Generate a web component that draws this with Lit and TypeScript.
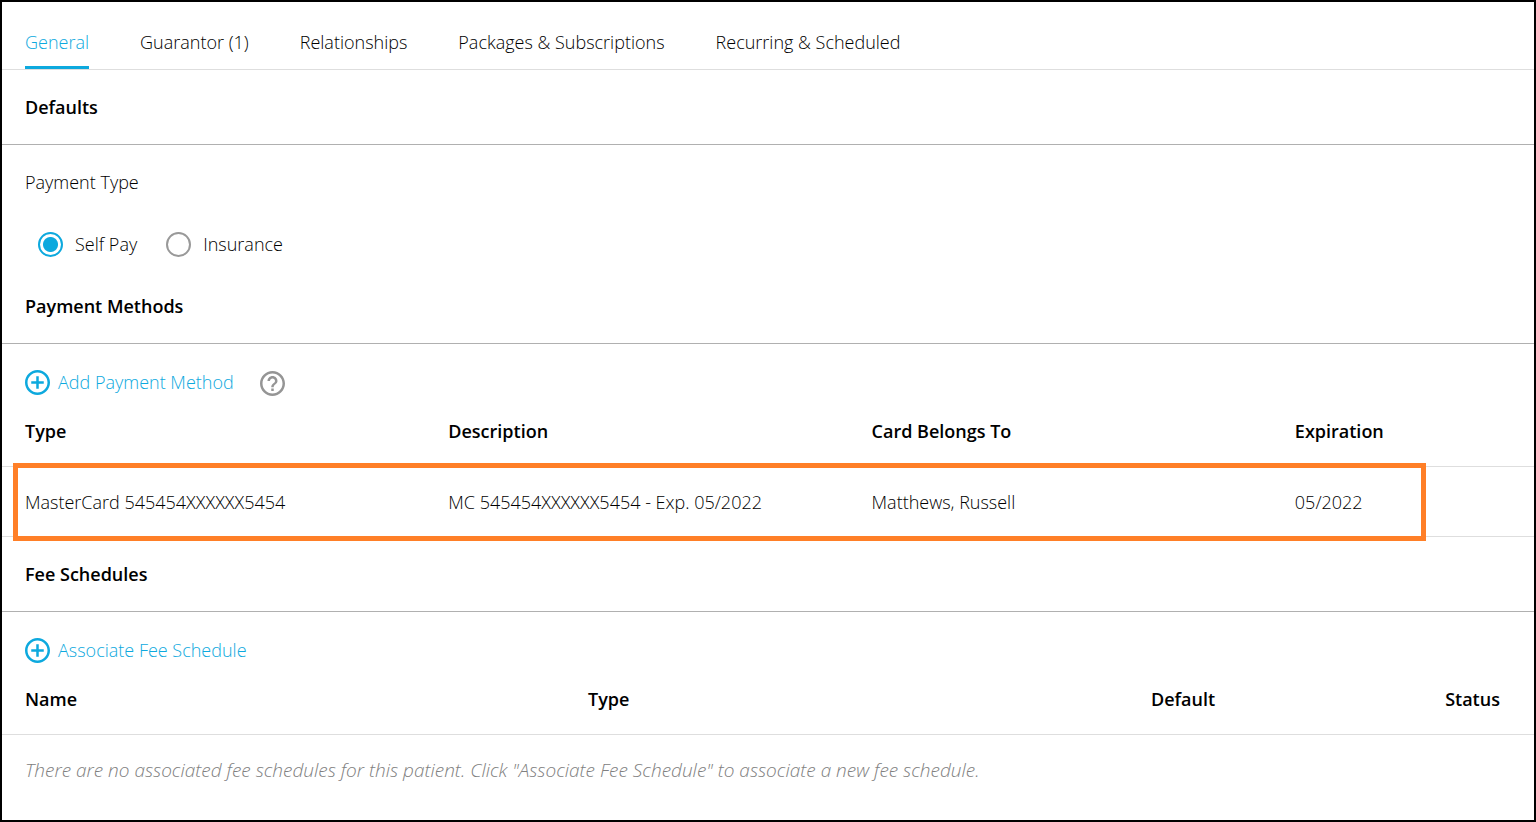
import { LitElement, html, css } from "lit";
import { customElement, state } from "lit/decorators.js";
import { classMap } from "lit/directives/class-map.js";

const TABS = [
  "General",
  "Guarantor (1)",
  "Relationships",
  "Packages & Subscriptions",
  "Recurring & Scheduled",
];

const PAYMENT_TYPES = ["Self Pay", "Insurance"];

const PAYMENT_METHODS = [
  {
    type: "MasterCard 545454XXXXXX5454",
    description: "MC 545454XXXXXX5454 - Exp. 05/2022",
    owner: "Matthews, Russell",
    expiration: "05/2022",
  },
];

const addIcon = html`<svg class="icon" viewBox="2 2 20 20" aria-hidden="true">
  <path
    d="M13 7h-2v4H7v2h4v4h2v-4h4v-2h-4V7zm-1-5C6.480 2 2 6.480 2 12s4.480 10 10 10 10-4.480 10-10S17.520 2 12 2zm0 18c-4.410 0-8-3.590-8-8s3.590-8 8-8 8 3.590 8 8-3.590 8-8 8z"
  />
</svg>`;

const helpIcon = html`<svg class="icon" viewBox="2 2 20 20" aria-hidden="true">
  <path
    d="M11 18h2v-2h-2v2zm1-16C6.480 2 2 6.480 2 12s4.480 10 10 10 10-4.480 10-10S17.520 2 12 2zm0 18c-4.410 0-8-3.590-8-8s3.590-8 8-8 8 3.590 8 8-3.590 8-8 8zm0-14c-2.210 0-4 1.790-4 4h2c0-1.100.9-2 2-2s2 .9 2 2c0 2-3 1.750-3 5h2c0-2.250 3-2.500 3-5 0-2.210-1.790-4-4-4z"
  />
</svg>`;

@customElement("app-root")
export class AppRoot extends LitElement {
  @state() private tab = TABS[0];
  @state() private paymentType = PAYMENT_TYPES[0];

  static styles = css`
    :host {
      display: block;
      box-sizing: border-box;
      min-height: 100vh;
      border: 2px solid #000;
      background: #fff;
      color: #000;
      font: 300 18px/24px "Open Sans", sans-serif;
    }
    button {
      margin: 0;
      padding: 0;
      border: 0;
      background: none;
      color: inherit;
      font: inherit;
      cursor: pointer;
    }
    .tabs {
      display: flex;
      gap: 51px;
      padding: 28px 23px 0;
      border-bottom: 1px solid #dedede;
    }
    .tab {
      padding-bottom: 12px;
      border-bottom: 3px solid transparent;
    }
    .tab.active {
      color: #0da9de;
      border-color: #0da9de;
    }
    .heading {
      margin: 0;
      padding: 25px 23px;
      border-bottom: 1px solid #b0b0b0;
      font-size: 18px;
      font-weight: 600;
    }
    .payment-type {
      display: flex;
      flex-direction: column;
      margin: 0;
      padding: 25px 23px 0;
      border: 0;
    }
    .payment-type legend {
      float: left;
      padding: 0;
      margin-bottom: 25px;
    }
    .options {
      display: flex;
      gap: 29px;
      padding: 0 13px;
    }
    .option {
      display: flex;
      align-items: center;
      gap: 12px;
      height: 50px;
    }
    .radio {
      appearance: none;
      box-sizing: border-box;
      width: 25px;
      height: 25px;
      margin: 0;
      border: 2px solid #999;
      border-radius: 50%;
    }
    .radio:checked {
      border-color: #0da9de;
      background: radial-gradient(circle, #0da9de 7px, transparent 8px);
    }
    .actions {
      display: flex;
      align-items: center;
      gap: 26px;
      height: 50px;
      padding: 13px 23px 0;
    }
    .add {
      display: flex;
      align-items: center;
      gap: 8px;
      color: #0da9de;
    }
    .help {
      padding-top: 3px;
      color: #959595;
    }
    .icon {
      display: block;
      width: 25px;
      height: 25px;
      fill: currentColor;
    }
    .table-area {
      position: relative;
    }
    table {
      width: 100%;
      table-layout: fixed;
      border-collapse: separate;
      border-spacing: 0;
    }
    th,
    td {
      box-sizing: border-box;
      border-bottom: 1px solid #dedede;
      text-align: left;
    }
    th {
      padding: 12px 0 23px 23px;
      font-weight: 600;
    }
    td {
      padding: 23px 0 22px 23px;
    }
    .method-col {
      width: 27.63%;
    }
    .fee-col {
      width: 36.75%;
    }
    .default-col {
      width: 19.2%;
    }
    .callout {
      position: absolute;
      box-sizing: border-box;
      left: 11px;
      right: 108px;
      bottom: -4px;
      height: 78px;
      border: 5px solid #ff7f27;
      pointer-events: none;
    }
    .empty {
      border: 0;
      color: #808080;
      font-size: 19px;
      font-style: italic;
    }
  `;

  render() {
    return html`
      <nav class="tabs" role="tablist">
        ${TABS.map(
          (name) => html`<button
            class=${classMap({ tab: true, active: name === this.tab })}
            role="tab"
            aria-selected=${name === this.tab}
            @click=${() => (this.tab = name)}
          >${name}</button>`
        )}
      </nav>

      <section>
        <h2 class="heading">Defaults</h2>
        <fieldset class="payment-type">
          <legend>Payment Type</legend>
          <div class="options">
            ${PAYMENT_TYPES.map(
              (name) => html`<label class="option">
                <input
                  class="radio"
                  type="radio"
                  name="payment-type"
                  .checked=${name === this.paymentType}
                  @change=${() => (this.paymentType = name)}
                />
                <span>${name}</span>
              </label>`
            )}
          </div>
        </fieldset>
      </section>

      <section>
        <h2 class="heading">Payment Methods</h2>
        <div class="actions">
          <button class="add">${addIcon}<span>Add Payment Method</span></button>
          <button class="help" aria-label="Help">${helpIcon}</button>
        </div>
        <div class="table-area">
          <table>
            <thead>
              <tr>
                <th class="method-col">Type</th>
                <th class="method-col">Description</th>
                <th class="method-col">Card Belongs To</th>
                <th>Expiration</th>
              </tr>
            </thead>
            <tbody>
              ${PAYMENT_METHODS.map(
                (m) => html`<tr>
                  <td>${m.type}</td>
                  <td>${m.description}</td>
                  <td>${m.owner}</td>
                  <td>${m.expiration}</td>
                </tr>`
              )}
            </tbody>
          </table>
          <div class="callout"></div>
        </div>
      </section>

      <section>
        <h2 class="heading">Fee Schedules</h2>
        <div class="actions">
          <button class="add">${addIcon}<span>Associate Fee Schedule</span></button>
        </div>
        <table>
          <thead>
            <tr>
              <th class="fee-col">Name</th>
              <th class="fee-col">Type</th>
              <th class="default-col">Default</th>
              <th>Status</th>
            </tr>
          </thead>
          <tbody>
            <tr>
              <td class="empty" colspan="4">
                There are no associated fee schedules for this patient. Click "Associate Fee
                Schedule" to associate a new fee schedule.
              </td>
            </tr>
          </tbody>
        </table>
      </section>
    `;
  }
}
